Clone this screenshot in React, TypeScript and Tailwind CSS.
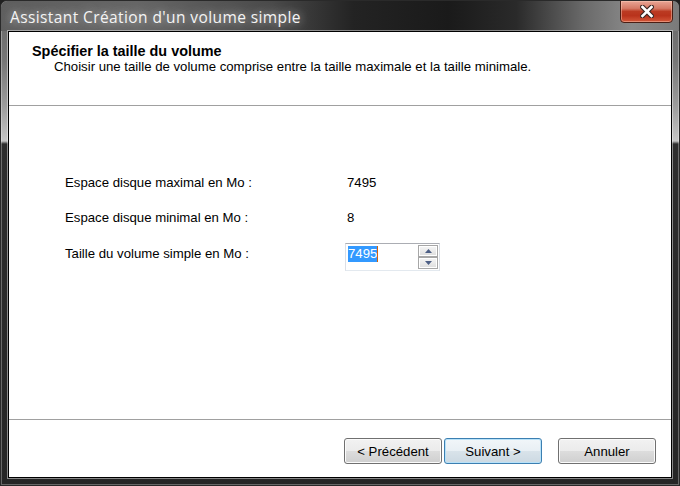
import React from "react";

function CloseGlyph() {
  return (
    <svg width="14" height="13" viewBox="0 0 14 13">
      <path d="M2.5 2 L11.5 11 M11.5 2 L2.5 11" stroke="#3b2622" strokeWidth="4.8" strokeLinecap="square" />
      <path d="M2.5 2 L11.5 11 M11.5 2 L2.5 11" stroke="#ffffff" strokeWidth="2.6" strokeLinecap="square" />
    </svg>
  );
}

function SpinBtn({ up }: { up: boolean }) {
  return (
    <div className="flex-1 flex items-center justify-center border border-[#a7a7a7] bg-[linear-gradient(to_bottom,#f6f6f6_0%,#eaeaea_50%,#dcdcdc_100%)] shadow-[inset_0_0_0_1px_#ffffff]">
      <svg width="7" height="4" viewBox="0 0 7 4">
        {up ? <path d="M0 4 L3.5 0 L7 4 Z" fill="#4d5f85" /> : <path d="M0 0 L3.5 4 L7 0 Z" fill="#4d5f85" />}
      </svg>
    </div>
  );
}

function WinButton({ label, primary }: { label: string; primary?: boolean }) {
  return (
    <div
      className={
        primary
          ? "w-[98px] h-[26px] rounded-[3px] border border-[#3c7fb1] bg-[linear-gradient(to_bottom,#f1f6f9_0%,#e8eff4_50%,#d9e3ea_50%,#ccd9e2_100%)] shadow-[inset_0_0_0_1px_#b8e2f9] flex items-center justify-center text-[13.2px] leading-[15px] text-black"
          : "w-[98px] h-[26px] rounded-[3px] border border-[#707070] bg-[linear-gradient(to_bottom,#f2f2f2_0%,#ebebeb_50%,#dddddd_50%,#cfcfcf_100%)] shadow-[inset_0_0_0_1px_#fbfbfb] flex items-center justify-center text-[13.2px] leading-[15px] text-black"
      }
    >
      {label}
    </div>
  );
}

export default function App() {
  return (
    <div className="w-[680px] h-[486px] bg-[#202020]">
      <div className="w-full h-full flex flex-col rounded-t-[7px] border border-[#2a2a2a] shadow-[inset_0_0_0_1px_rgba(255,255,255,0.3)] bg-[linear-gradient(to_bottom,#666666_0px,#777777_60px,#9c9c9c_105px,#c6c6c6_140px,#2e2e2e_143px,#262626_100%)] overflow-hidden">
        {/* Title bar */}
        <div className="h-[30px] flex items-start rounded-t-[6px] bg-[linear-gradient(to_right,#5e5e5e_0%,#666666_20%,#4a4a4a_40%,#232323_52%,#1a1a1a_66%,#2a2a2a_76%,#6a6a6a_86%,#8a8a8a_93%,#7a7a7a_100%)]">
          <div
            className="pl-[9px] pt-[6px] text-[15.5px] leading-[20px] tracking-[0.4px] text-[#f4f4f4] [text-shadow:0_0_8px_rgba(255,255,255,0.55),0_0_16px_rgba(255,255,255,0.35)] whitespace-nowrap"
            style={{ fontFamily: '"Open Sans", "Noto Sans", sans-serif' }}
          >
            Assistant Création d'un volume simple
          </div>
          <div className="ml-auto mr-[6px] -mt-px w-[53px] h-[23px] rounded-b-[4px] border border-[#4a1e14] bg-[linear-gradient(to_bottom,#e9a595_0%,#d67a66_35%,#bb3a22_50%,#b9331c_70%,#d4583a_100%)] shadow-[inset_0_0_0_1px_rgba(255,210,190,0.45)] flex items-center justify-center">
            <CloseGlyph />
          </div>
        </div>

        {/* Client area */}
        <div
          className="flex-1 mx-[7px] mb-[7px] border border-black bg-white flex flex-col shadow-[0_0_0_1px_rgba(255,255,255,0.45)] text-black"
          style={{ fontFamily: '"Liberation Sans", Arial, sans-serif' }}
        >
          {/* Header */}
          <div className="h-[74px] border-b border-[#a0a0a0] pl-[23px] pt-[11px] flex flex-col">
            <div className="text-[14.4px] leading-[16px] font-bold">Spécifier la taille du volume</div>
            <div className="pl-[22px] text-[13.2px] leading-[15px]">
              Choisir une taille de volume comprise entre la taille maximale et la taille minimale.
            </div>
          </div>

          {/* Body */}
          <div className="h-[314px] border-b border-[#a0a0a0] pl-[56px] pt-[69px] flex flex-col text-[13.2px] leading-[15px]">
            <div className="flex">
              <div className="w-[280px]">Espace disque maximal en Mo :</div>
              <div className="pl-[2px]">7495</div>
            </div>
            <div className="flex mt-[20px]">
              <div className="w-[280px]">Espace disque minimal en Mo :</div>
              <div className="pl-[2px]">8</div>
            </div>
            <div className="flex mt-[18px]">
              <div className="w-[280px] pt-[3px]">Taille du volume simple en Mo :</div>
              <div className="w-[95px] h-[28px] border border-[#dbdfe6] border-t-[#abadb3] border-b-[#e3e9ef] flex">
                <div className="flex-1 pl-[2px] pt-[2px] flex items-start">
                  <span className="bg-[#3399ff] text-white leading-[16px]">7495</span>
                  <span className="w-px h-[16px] bg-[#d0620e]"></span>
                </div>
                <div className="w-[20px] mt-px mb-px mr-px flex flex-col">
                  <SpinBtn up />
                  <SpinBtn up={false} />
                </div>
              </div>
            </div>
          </div>

          {/* Footer */}
          <div className="flex-1 flex items-start justify-end pt-[18px] pr-[15px]">
            <WinButton label="< Précédent" />
            <div className="w-[2px]"></div>
            <WinButton label="Suivant >" primary />
            <div className="w-[16px]"></div>
            <WinButton label="Annuler" />
          </div>
        </div>
      </div>
    </div>
  );
}
